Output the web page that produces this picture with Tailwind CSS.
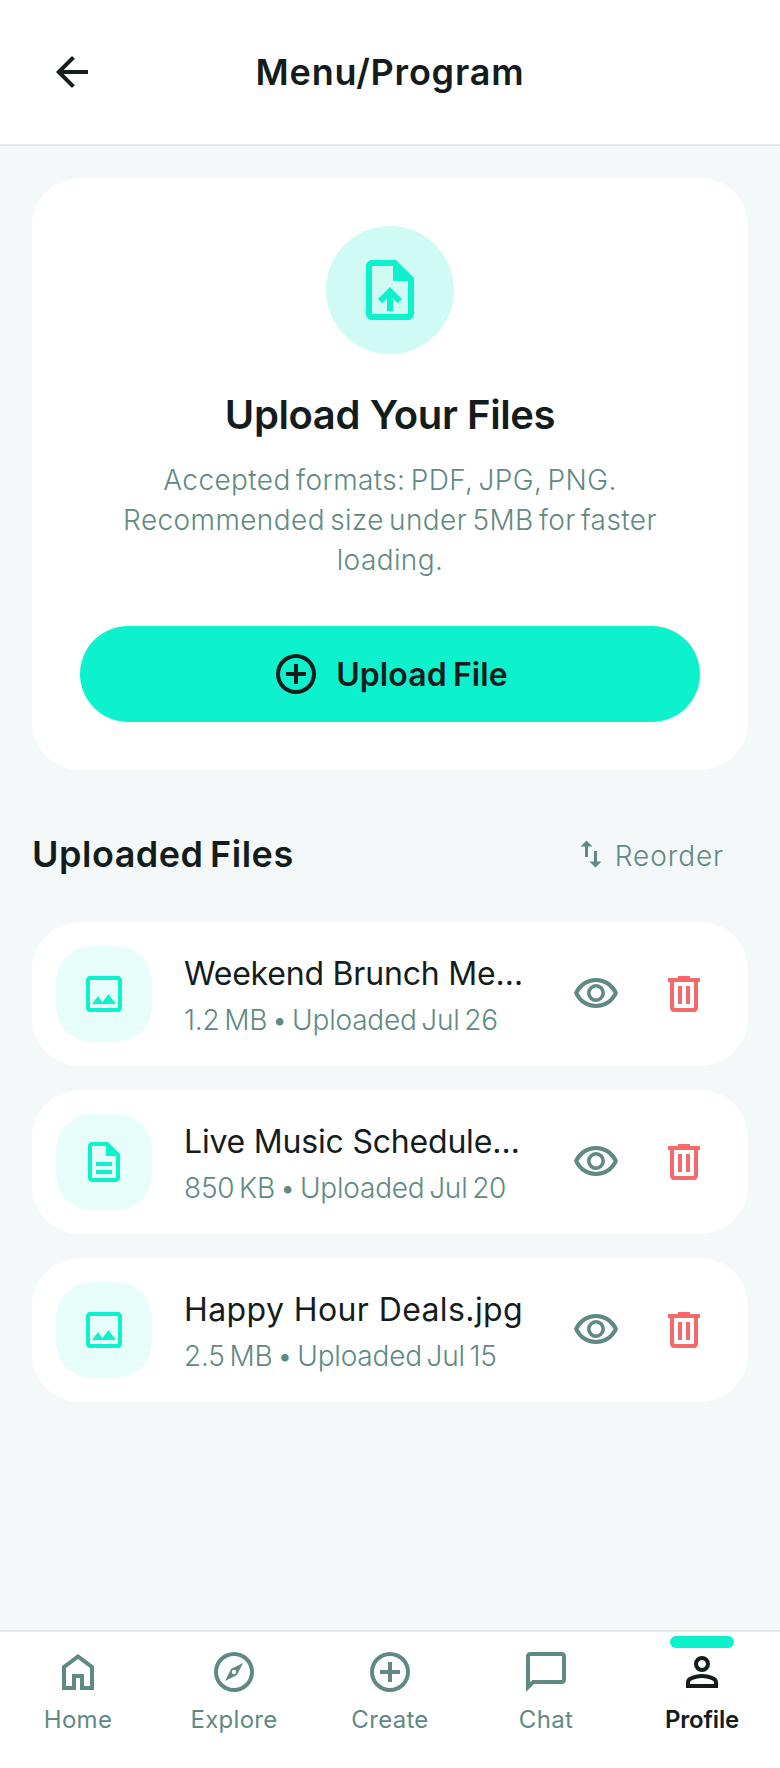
<!DOCTYPE html>
<html lang="en">
  <head>
    <meta charset="UTF-8" />
    <title>Menu/Program</title>
    <script src="https://cdn.jsdelivr.net/npm/@tailwindcss/browser@4"></script>
  </head>
  <body class="bg-[#f5f8f9] font-['Inter',sans-serif] text-[#141c1c]">
    <div class="flex flex-col h-[1768px] w-[780px] overflow-hidden">
      <header class="flex items-center h-[146px] shrink-0 bg-white border-b-2 border-[#e3e7e9] pl-12 relative">
        <svg class="w-12 h-12" viewBox="0 0 24 24" fill="currentColor"><path d="m7.825 13 5.6 5.6L12 20l-8-8 8-8 1.425 1.4-5.6 5.6H20v2H7.825Z"/></svg>
        <h1 class="absolute inset-x-0 text-center text-[36px] leading-[48px] font-semibold tracking-[0.8px]">Menu/Program</h1>
      </header>

      <main class="flex-1 px-8 pt-8">
        <section class="bg-white rounded-[48px] p-12 flex flex-col items-center">
          <div class="w-32 h-32 rounded-full bg-[#cffbf4] flex items-center justify-center text-[#0df2cd]">
            <svg class="w-[72px] h-[72px]" viewBox="0 0 24 24" fill="currentColor"><path d="M14 2H6c-1.1 0-2 .9-2 2v16c0 1.1.9 2 2 2h12c1.1 0 2-.9 2-2V8l-6-6zm4 18H6V4h7v5h5v11zM8 15.01l1.41 1.41L11 14.84V19h2v-4.16l1.59 1.59L16 15.01 12.01 11 8 15.01z"/></svg>
          </div>
          <h2 class="mt-[33px] text-[40px] leading-[56px] font-semibold tracking-[-0.4px]">Upload Your Files</h2>
          <p class="mt-[17px] w-[580px] text-center text-[28px] leading-[40px] tracking-[0.4px] [word-spacing:-3px] font-light text-[#5f8a83]">Accepted formats: PDF, JPG, PNG. Recommended size under 5MB for faster loading.</p>
          <button class="mt-[46px] w-full h-24 rounded-full bg-[#0df2cd] flex items-center justify-center gap-4">
            <svg class="w-12 h-12" viewBox="0 0 24 24" fill="currentColor"><path d="M11 17h2v-4h4v-2h-4V7h-2v4H7v2h4v4Zm1 5a10 10 0 1 1 0-20 10 10 0 0 1 0 20Zm0-2a8 8 0 1 0 0-16 8 8 0 0 0 0 16Z"/></svg>
            <span class="mt-[2px] text-[32px] font-semibold tracking-[0.1px] [word-spacing:-2px]">Upload File</span>
          </button>
        </section>

        <div class="flex items-center justify-between mt-[52px] h-[64px] pr-6">
          <h3 class="text-[36px] font-semibold tracking-[0.5px] [word-spacing:-3px]">Uploaded Files</h3>
          <button class="flex items-center gap-[6px] text-[#5f8a83]">
            <svg class="w-9 h-9" viewBox="0 0 24 24" fill="currentColor"><path d="M16 17.01V10h-2v7.01h-3L15 21l4-3.99h-3zM9 3L5 6.99h3V14h2V6.99h3L9 3z"/></svg>
            <span class="mt-1 text-[28px] tracking-[0.9px] font-light">Reorder</span>
          </button>
        </div>

        <ul class="flex flex-col gap-6 mt-[36px]">
          <li class="bg-white rounded-[48px] h-36 flex items-center pl-6 pr-10">
            <div class="w-24 h-24 shrink-0 rounded-[36px] bg-[#e6fdf9] flex items-center justify-center text-[#0df2cd]">
              <svg class="w-12 h-12" viewBox="0 0 24 24" fill="currentColor"><path d="M5 21q-.825 0-1.413-.588T3 19V5q0-.825.588-1.413T5 3h14q.825 0 1.413.588T21 5v14q0 .825-.588 1.413T19 21H5Zm0-2h14V5H5v14Zm1-2h12l-3.75-5-3 4L9 13l-3 4Z"/></svg>
            </div>
            <div class="ml-8 w-[340px] shrink-0 pt-[2px]">
              <p class="truncate text-[32px] leading-[46px] font-normal tracking-[-0.2px]">Weekend Brunch Menu.jpg</p>
              <p class="mt-[3px] text-[28px] leading-[40px] font-light tracking-[-0.2px] [word-spacing:-3px] text-[#5f8a83]">1.2 MB • Uploaded Jul 26</p>
            </div>
            <div class="ml-auto flex items-center gap-10">
              <svg class="w-12 h-12 text-[#5f8a83]" viewBox="0 0 24 24" fill="currentColor"><path d="M12 16q1.875 0 3.188-1.313T16.5 11.5q0-1.875-1.313-3.188T12 7q-1.875 0-3.188 1.313T7.5 11.5q0 1.875 1.313 3.188T12 16Zm0-1.8q-1.125 0-1.913-.788T9.3 11.5q0-1.125.788-1.913T12 8.8q1.125 0 1.913.788T14.7 11.5q0 1.125-.787 1.913T12 14.2Zm0 4.8q-3.65 0-6.65-2.038T1 11.5q1.35-3.425 4.35-5.463T12 4q3.65 0 6.65 2.038T23 11.5q-1.35 3.425-4.35 5.463T12 19Zm0-2q2.825 0 5.188-1.488T20.8 11.5q-1.25-2.525-3.613-4.013T12 6Q9.175 6 6.812 7.488T3.2 11.5q1.25 2.525 3.612 4.013T12 17Z"/></svg>
              <svg class="w-12 h-12 text-[#f46a6a]" viewBox="0 0 24 24" fill="currentColor"><path d="M7 21q-.825 0-1.413-.588T5 19V6H4V4h5V3h6v1h5v2h-1v13q0 .825-.587 1.413T17 21H7ZM17 6H7v13h10V6ZM9 17h2V8H9v9Zm4 0h2V8h-2v9Z"/></svg>
            </div>
          </li>
          <li class="bg-white rounded-[48px] h-36 flex items-center pl-6 pr-10">
            <div class="w-24 h-24 shrink-0 rounded-[36px] bg-[#e6fdf9] flex items-center justify-center text-[#0df2cd]">
              <svg class="w-12 h-12" viewBox="0 0 24 24" fill="currentColor"><path d="M8 16h8v2H8zm0-4h8v2H8zm6-10H6c-1.1 0-2 .9-2 2v16c0 1.1.89 2 1.99 2H18c1.1 0 2-.9 2-2V8l-6-6zm4 18H6V4h7v5h5v11z"/></svg>
            </div>
            <div class="ml-8 w-[340px] shrink-0 pt-[2px]">
              <p class="truncate text-[32px] leading-[46px] font-normal tracking-[-0.2px]">Live Music Schedule.pdf</p>
              <p class="mt-[3px] text-[28px] leading-[40px] font-light tracking-[-0.2px] [word-spacing:-3px] text-[#5f8a83]">850 KB • Uploaded Jul 20</p>
            </div>
            <div class="ml-auto flex items-center gap-10">
              <svg class="w-12 h-12 text-[#5f8a83]" viewBox="0 0 24 24" fill="currentColor"><path d="M12 16q1.875 0 3.188-1.313T16.5 11.5q0-1.875-1.313-3.188T12 7q-1.875 0-3.188 1.313T7.5 11.5q0 1.875 1.313 3.188T12 16Zm0-1.8q-1.125 0-1.913-.788T9.3 11.5q0-1.125.788-1.913T12 8.8q1.125 0 1.913.788T14.7 11.5q0 1.125-.787 1.913T12 14.2Zm0 4.8q-3.65 0-6.65-2.038T1 11.5q1.35-3.425 4.35-5.463T12 4q3.65 0 6.65 2.038T23 11.5q-1.35 3.425-4.35 5.463T12 19Zm0-2q2.825 0 5.188-1.488T20.8 11.5q-1.25-2.525-3.613-4.013T12 6Q9.175 6 6.812 7.488T3.2 11.5q1.25 2.525 3.612 4.013T12 17Z"/></svg>
              <svg class="w-12 h-12 text-[#f46a6a]" viewBox="0 0 24 24" fill="currentColor"><path d="M7 21q-.825 0-1.413-.588T5 19V6H4V4h5V3h6v1h5v2h-1v13q0 .825-.587 1.413T17 21H7ZM17 6H7v13h10V6ZM9 17h2V8H9v9Zm4 0h2V8h-2v9Z"/></svg>
            </div>
          </li>
          <li class="bg-white rounded-[48px] h-36 flex items-center pl-6 pr-10">
            <div class="w-24 h-24 shrink-0 rounded-[36px] bg-[#e6fdf9] flex items-center justify-center text-[#0df2cd]">
              <svg class="w-12 h-12" viewBox="0 0 24 24" fill="currentColor"><path d="M5 21q-.825 0-1.413-.588T3 19V5q0-.825.588-1.413T5 3h14q.825 0 1.413.588T21 5v14q0 .825-.588 1.413T19 21H5Zm0-2h14V5H5v14Zm1-2h12l-3.75-5-3 4L9 13l-3 4Z"/></svg>
            </div>
            <div class="ml-8 w-[340px] shrink-0 pt-[2px]">
              <p class="truncate text-[32px] leading-[46px] font-normal tracking-[0.4px]">Happy Hour Deals.jpg</p>
              <p class="mt-[3px] text-[28px] leading-[40px] font-light tracking-[-0.2px] [word-spacing:-3px] text-[#5f8a83]">2.5 MB • Uploaded Jul 15</p>
            </div>
            <div class="ml-auto flex items-center gap-10">
              <svg class="w-12 h-12 text-[#5f8a83]" viewBox="0 0 24 24" fill="currentColor"><path d="M12 16q1.875 0 3.188-1.313T16.5 11.5q0-1.875-1.313-3.188T12 7q-1.875 0-3.188 1.313T7.5 11.5q0 1.875 1.313 3.188T12 16Zm0-1.8q-1.125 0-1.913-.788T9.3 11.5q0-1.125.788-1.913T12 8.8q1.125 0 1.913.788T14.7 11.5q0 1.125-.787 1.913T12 14.2Zm0 4.8q-3.65 0-6.65-2.038T1 11.5q1.35-3.425 4.35-5.463T12 4q3.65 0 6.65 2.038T23 11.5q-1.35 3.425-4.35 5.463T12 19Zm0-2q2.825 0 5.188-1.488T20.8 11.5q-1.25-2.525-3.613-4.013T12 6Q9.175 6 6.812 7.488T3.2 11.5q1.25 2.525 3.612 4.013T12 17Z"/></svg>
              <svg class="w-12 h-12 text-[#f46a6a]" viewBox="0 0 24 24" fill="currentColor"><path d="M7 21q-.825 0-1.413-.588T5 19V6H4V4h5V3h6v1h5v2h-1v13q0 .825-.587 1.413T17 21H7ZM17 6H7v13h10V6ZM9 17h2V8H9v9Zm4 0h2V8h-2v9Z"/></svg>
            </div>
          </li>
        </ul>
      </main>

      <nav class="h-[138px] shrink-0 bg-white border-t-2 border-[#e3e7e9] grid grid-cols-5 text-[24px] leading-[36px] tracking-[0.3px] text-[#5f8a83]">
        <a class="flex flex-col items-center pt-4">
          <svg class="w-12 h-12" viewBox="0 0 24 24" fill="currentColor"><path d="M6 19h3v-6h6v6h3v-9l-6-4.5L6 10v9Zm-2 2V9l8-6 8 6v12h-7v-6h-2v6H4Z"/></svg>
          <span class="mt-[6px]">Home</span>
        </a>
        <a class="flex flex-col items-center pt-4">
          <svg class="w-12 h-12" viewBox="0 0 24 24" fill="currentColor"><path d="M12 22a10 10 0 1 1 0-20 10 10 0 0 1 0 20Zm0-2a8 8 0 1 0 0-16 8 8 0 0 0 0 16Z"/><path fill-rule="evenodd" d="m7.500 16.500 3-6 6-3-3 6-6 3Zm4.500-3.400a1.100 1.100 0 1 0 0-2.200 1.100 1.100 0 0 0 0 2.200Z"/></svg>
          <span class="mt-[6px]">Explore</span>
        </a>
        <a class="flex flex-col items-center pt-4">
          <svg class="w-12 h-12" viewBox="0 0 24 24" fill="currentColor"><path d="M11 17h2v-4h4v-2h-4V7h-2v4H7v2h4v4Zm1 5a10 10 0 1 1 0-20 10 10 0 0 1 0 20Zm0-2a8 8 0 1 0 0-16 8 8 0 0 0 0 16Z"/></svg>
          <span class="mt-[6px]">Create</span>
        </a>
        <a class="flex flex-col items-center pt-4">
          <svg class="w-12 h-12" viewBox="0 0 24 24" fill="currentColor"><path d="M2 22V4q0-.825.588-1.413T4 2h16q.825 0 1.413.588T22 4v12q0 .825-.588 1.413T20 18H6l-4 4Zm3.150-6H20V4H4v13.125L5.150 16Z"/></svg>
          <span class="mt-[6px]">Chat</span>
        </a>
        <a class="relative flex flex-col items-center pt-4 text-[#141c1c]">
          <div class="absolute top-[4px] w-16 h-3 rounded-full bg-[#0df2cd]"></div>
          <svg class="w-12 h-12" viewBox="0 0 24 24" fill="currentColor"><path d="M12 12q-1.650 0-2.825-1.175T8 8q0-1.650 1.175-2.825T12 4q1.650 0 2.825 1.175T16 8q0 1.650-1.175 2.825T12 12Zm-8 8v-2.800q0-.850.438-1.563T5.600 14.550q1.550-.775 3.150-1.163T12 13q1.650 0 3.250.388t3.150 1.163q.725.375 1.163 1.087T20 17.200V20H4Zm2-2h12v-.800q0-.275-.138-.500t-.362-.350q-1.350-.675-2.725-1.012T12 15q-1.400 0-2.775.338T6.500 16.350q-.225.125-.363.350T6 17.200v.800Zm6-8q.825 0 1.413-.588T14 8q0-.825-.588-1.413T12 6q-.825 0-1.413.588T10 8q0 .825.588 1.413T12 10Z"/></svg>
          <span class="mt-[6px] font-semibold tracking-[-0.2px]">Profile</span>
        </a>
      </nav>
    </div>
  </body>
</html>
